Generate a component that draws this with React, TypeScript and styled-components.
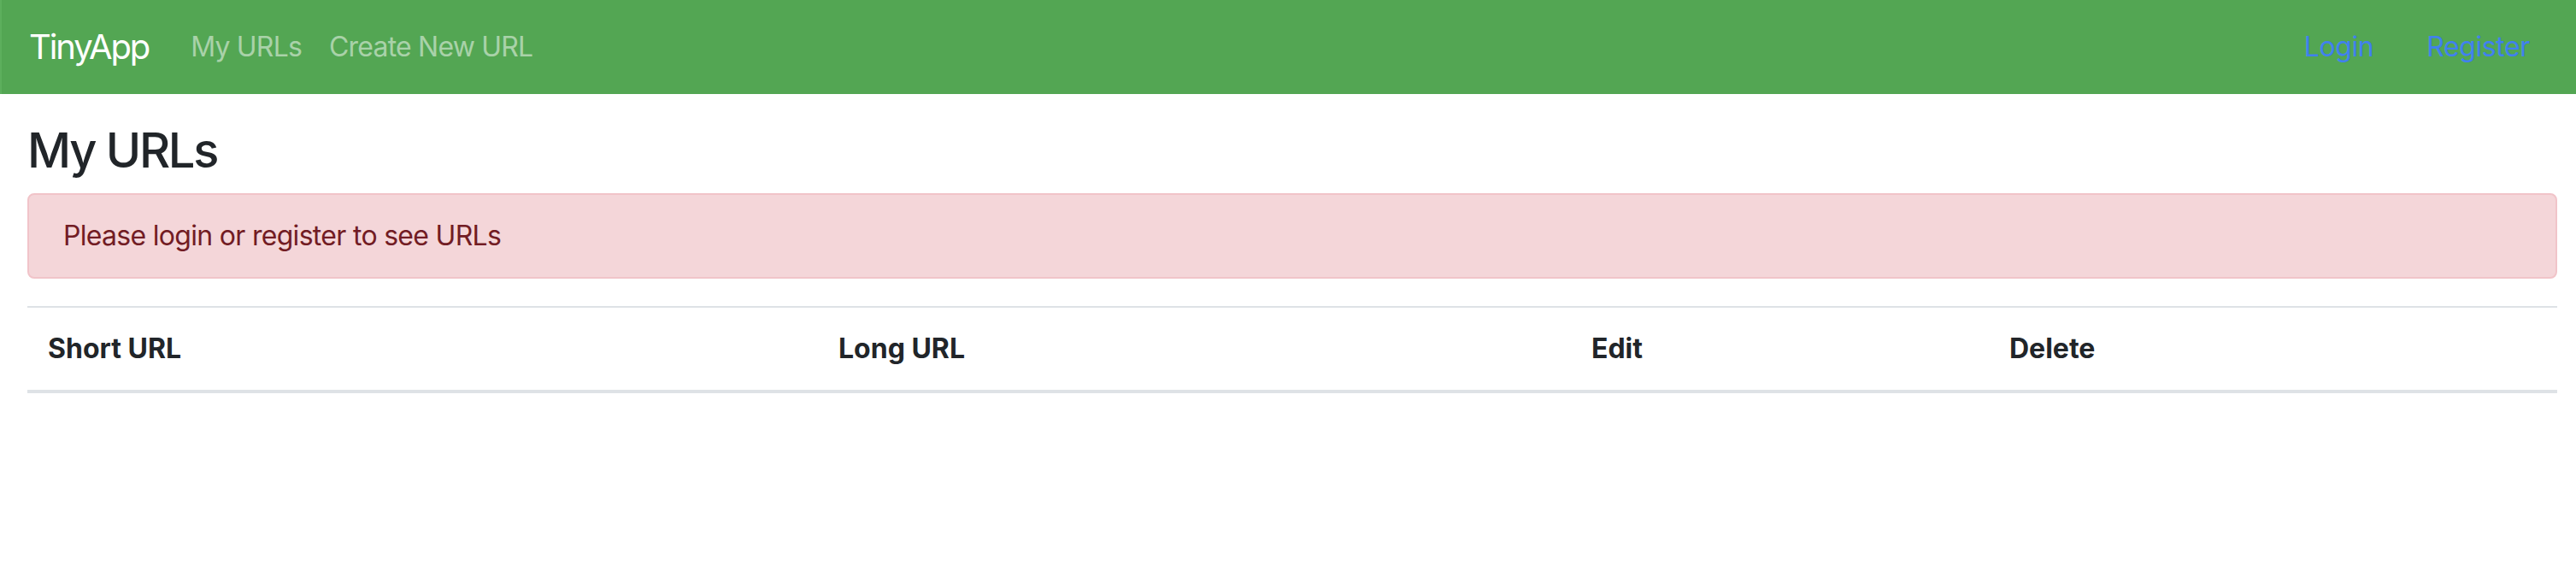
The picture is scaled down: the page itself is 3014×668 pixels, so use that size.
import React from "react";
import styled, { createGlobalStyle } from "styled-components";

const GlobalStyle = createGlobalStyle`
  html, body {
    margin: 0;
    padding: 0;
    background: #ffffff;
    font-family: Inter, "Noto Sans", "Liberation Sans", sans-serif;
    color: #212529;
  }
  * { box-sizing: border-box; }
`;

const Navbar = styled.nav`
  display: flex;
  align-items: center;
  height: 110px;
  padding: 0 38px 0 32px;
  background: #53a653;
  border-left: 2px solid #5daf5d;
`;

const Brand = styled.a`
  font-size: 40px;
  line-height: 60px;
  color: #ffffff;
  margin-right: 33px;
  text-decoration: none;
  letter-spacing: -2.1px;
`;

const NavGroup = styled.div<{ $right?: boolean }>`
  display: flex;
  align-items: center;
  margin-left: ${(p) => (p.$right ? "auto" : "0")};
  gap: ${(p) => (p.$right ? "30px" : "0")};
`;

const NavLink = styled.a<{ $accent?: boolean }>`
  font-size: 32px;
  line-height: 48px;
  padding: 0 16px;
  text-decoration: none;
  letter-spacing: ${(p) => (p.$accent ? "-0.4px" : "-0.8px")};
  color: ${(p) => (p.$accent ? "#4080ef" : "rgba(255,255,255,0.5)")};
`;

const Container = styled.main`
  padding: 0 22px 0 32px;
`;

const Title = styled.h3`
  margin: 33px 0 16px;
  font-size: 56px;
  line-height: 67px;
  font-weight: 500;
  letter-spacing: -2.3px;
`;

const Alert = styled.div`
  padding: 24px 40px;
  border: 2px solid #f1c4c9;
  border-radius: 8px;
  background: #f4d6d9;
  color: #721c24;
  font-size: 32px;
  line-height: 48px;
  margin-bottom: 32px;
  letter-spacing: -0.7px;
`;

const Table = styled.table`
  width: 100%;
  border-collapse: collapse;
  table-layout: fixed;
`;

const HeadCell = styled.th<{ $w: number }>`
  width: ${(p) => p.$w}px;
  text-align: left;
  padding: 24px;
  font-size: 32px;
  line-height: 48px;
  font-weight: 700;
  letter-spacing: 0;
  border-top: 2px solid #dee2e6;
  border-bottom: 4px solid #dee2e6;
`;

export default function App() {
  return (
    <>
      <GlobalStyle />
      <Navbar>
        <Brand href="#">TinyApp</Brand>
        <NavGroup>
          <NavLink href="#">My URLs</NavLink>
          <NavLink href="#">Create New URL</NavLink>
        </NavGroup>
        <NavGroup $right>
          <NavLink $accent href="#">Login</NavLink>
          <NavLink $accent href="#">Register</NavLink>
        </NavGroup>
      </Navbar>
      <Container>
        <Title>My URLs</Title>
        <Alert>Please login or register to see URLs</Alert>
        <Table>
          <thead>
            <tr>
              <HeadCell $w={925}>Short URL</HeadCell>
              <HeadCell $w={881}>Long URL</HeadCell>
              <HeadCell $w={489}>Edit</HeadCell>
              <HeadCell $w={665}>Delete</HeadCell>
            </tr>
          </thead>
          <tbody />
        </Table>
      </Container>
    </>
  );
}
